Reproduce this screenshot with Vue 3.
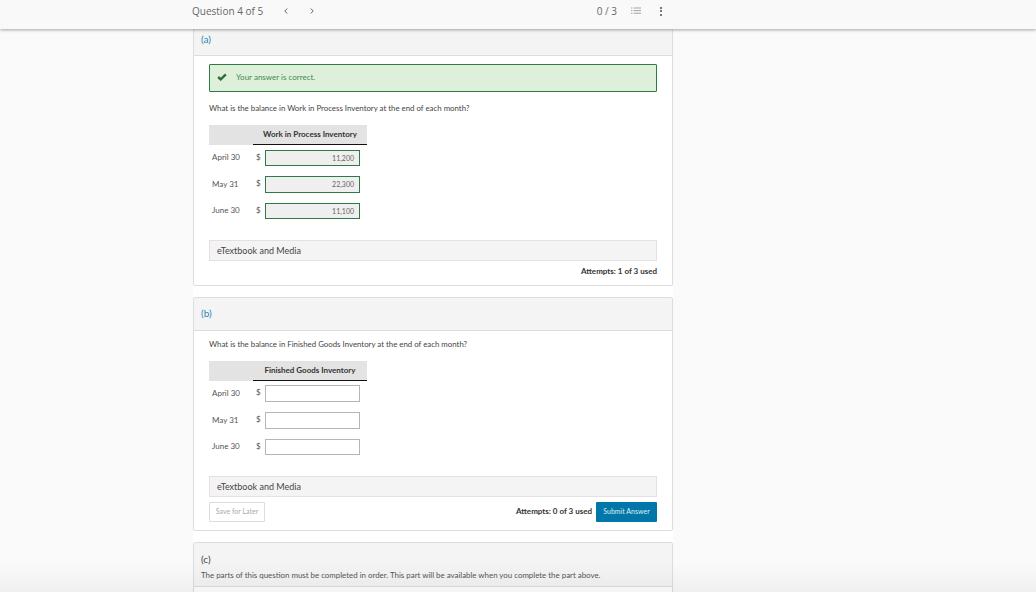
<template>
  <div class="page">
    <header class="topbar">
      <div class="topbar-inner">
        <span class="q-count">Question 4 of 5</span>
        <svg class="chev first" viewBox="0 0 8 8"><path d="M5.2 1.5 2.8 4l2.4 2.5" /></svg>
        <svg class="chev" viewBox="0 0 8 8"><path d="M2.8 1.5 5.2 4 2.8 6.5" /></svg>
        <span class="score">0 / 3</span>
        <svg class="list-icon" viewBox="0 0 10 8">
          <path d="M0 1h1.4M2.6 1H10M0 3.6h1.4M2.6 3.6H10M0 6.2h1.4M2.6 6.2H10" />
        </svg>
        <div class="dots"><i></i><i></i><i></i></div>
      </div>
    </header>

    <main class="content">
      <section v-for="part in parts" :key="part.label" class="card" :class="{ 'card-first': part.correct }">
        <div class="card-head">{{ part.label }}</div>
        <div class="card-body">
          <div v-if="part.correct" class="alert">
            <svg class="check" viewBox="0 0 12 10"><path d="M1.2 5 4.4 8 10.8 1.8" /></svg>
            <span class="alert-text">Your answer is correct.</span>
          </div>
          <p class="question">{{ part.question }}</p>

          <div class="answer-table">
            <div class="th-blank"></div>
            <div class="th-title">{{ part.account }}</div>
            <template v-for="row in part.rows" :key="row.month">
              <div class="month">{{ row.month }}</div>
              <div class="cell">
                <span class="dollar">$</span>
                <div class="input" :class="{ filled: part.correct }">{{ row.value }}</div>
              </div>
            </template>
          </div>

          <div class="media">eTextbook and Media</div>

          <div v-if="part.correct" class="foot foot-used">
            <span class="attempts">{{ part.attempts }}</span>
          </div>
          <div v-else class="foot">
            <button class="later">Save for Later</button>
            <span class="attempts">{{ part.attempts }}</span>
            <button class="submit">Submit Answer</button>
          </div>
        </div>
      </section>

      <section class="card card-locked">
        <div class="locked-head">
          <div class="locked-label">(c)</div>
          <div class="locked-note">The parts of this question must be completed in order. This part will be available when you complete the part above.</div>
        </div>
        <div class="locked-rest"></div>
      </section>
    </main>
    <div class="bottom-fade"></div>
  </div>
</template>

<script setup>
const parts = [
  {
    label: '(a)',
    correct: true,
    question: 'What is the balance in Work in Process Inventory at the end of each month?',
    account: 'Work in Process Inventory',
    attempts: 'Attempts: 1 of 3 used',
    rows: [
      { month: 'April 30', value: '11,200' },
      { month: 'May 31', value: '22,300' },
      { month: 'June 30', value: '11,100' }
    ]
  },
  {
    label: '(b)',
    correct: false,
    question: 'What is the balance in Finished Goods Inventory at the end of each month?',
    account: 'Finished Goods Inventory',
    attempts: 'Attempts: 0 of 3 used',
    rows: [
      { month: 'April 30', value: '' },
      { month: 'May 31', value: '' },
      { month: 'June 30', value: '' }
    ]
  }
]
</script>

<style>
html, body {
  margin: 0;
  background: #fafafa;
}
</style>

<style scoped>
.page {
  height: 592px;
  overflow: hidden;
  position: relative;
  background: #fafafa;
  font-family: Lato, "Liberation Sans", sans-serif;
  color: #444;
}

.topbar {
  height: 29px;
  background: #f9f9f9;
  box-shadow: 0 1px 3px rgba(0, 0, 0, 0.35);
  position: relative;
  z-index: 2;
}

.topbar-inner {
  width: 480px;
  height: 100%;
  box-sizing: border-box;
  padding-bottom: 7px;
  margin-left: 192px;
  display: flex;
  align-items: center;
  font-family: "Open Sans", sans-serif;
  font-size: 10px;
  color: #666;
}

.chev {
  width: 8px;
  height: 8px;
  margin-left: 18px;
  fill: none;
  stroke: #666;
  stroke-width: 1;
}

.chev.first {
  margin-left: 19px;
}

.score {
  margin-left: auto;
}

.list-icon {
  width: 10px;
  height: 8px;
  margin-left: 14px;
  fill: none;
  stroke: #999;
  stroke-width: 0.9;
}

.dots {
  display: flex;
  flex-direction: column;
  gap: 1.5px;
  margin-left: 19px;
  margin-right: 10px;
}

.dots i {
  width: 2px;
  height: 2px;
  background: #777;
}

.content {
  width: 480px;
  margin-left: 193px;
  margin-top: -1px;
  background: #fff;
  display: flex;
  flex-direction: column;
  gap: 11px;
}

.card {
  border: 1px solid #ddd;
  border-radius: 2px;
  background: #fff;
}

.card-first {
  border-top: 0;
}

.card-head {
  height: 33px;
  padding: 9px 7px 0;
  box-sizing: border-box;
  background: #f4f4f4;
  border-bottom: 1px solid #ddd;
  font-size: 10px;
  color: #1f87b4;
}

.card-first .card-head {
  height: 28px;
  padding-top: 5px;
}

.card-body {
  padding: 0 15px;
}

.alert {
  height: 28px;
  margin-top: 8px;
  box-sizing: border-box;
  border: 1px solid #2f7a43;
  border-radius: 1px;
  background: #deefda;
  display: flex;
  align-items: center;
  padding-left: 7px;
  font-size: 8px;
  color: #3f8a55;
}

.alert-text {
  padding-bottom: 2px;
}

.check {
  width: 10px;
  height: 8px;
  margin-right: 9px;
  margin-top: -3px;
  fill: none;
  stroke: #2b6e3b;
  stroke-width: 3;
}

.question {
  margin: 0;
  padding-top: 8px;
  height: 22px;
  line-height: 11px;
  font-size: 7.85px;
  color: #444;
}

.card-first .question {
  padding-top: 11px;
}

.answer-table {
  display: grid;
  grid-template-columns: 44px 114px;
  grid-template-rows: 20px repeat(3, 26.67px);
  width: 158px;
  font-size: 8px;
}

.th-blank,
.th-title {
  background: #e3e3e3;
}

.th-title {
  border-bottom: 1px solid #111;
  box-sizing: border-box;
  text-align: center;
  line-height: 18px;
  font-weight: 700;
  color: #333;
}

.month {
  padding-left: 3px;
  line-height: 24px;
  color: #555;
}

.cell {
  display: flex;
  align-items: flex-start;
  padding-top: 4.5px;
}

.dollar {
  width: 9px;
  padding-left: 3px;
  line-height: 14px;
  color: #555;
}

.input {
  width: 95px;
  height: 16.5px;
  box-sizing: border-box;
  border: 1px solid #b5b5b5;
  text-align: right;
  padding-right: 5px;
  line-height: 15px;
  font-size: 7px;
  color: #666;
  background: #fff;
}

.input.filled {
  background: #efefef;
  border-color: #2f7a43;
}

.media {
  height: 21px;
  margin-top: 15px;
  box-sizing: border-box;
  border: 1px solid #e2e2e2;
  background: #f4f4f4;
  padding-left: 7px;
  line-height: 19px;
  font-size: 9px;
  color: #444;
}

.foot {
  display: flex;
  align-items: center;
  height: 33px;
  padding: 5px 0 8px;
  box-sizing: border-box;
}

.foot-used {
  justify-content: flex-end;
  height: 24px;
  padding: 0 0 3px;
}

.attempts {
  padding-bottom: 1px;
  font-size: 8px;
  font-weight: 700;
  color: #333;
}

.later {
  width: 56px;
  height: 20px;
  margin: 0 auto 0 0;
  padding: 0 0 1px;
  border: 1px solid #ddd;
  border-radius: 1px;
  background: #fff;
  font-family: inherit;
  font-size: 7px;
  color: #aaa;
}

.submit {
  width: 61px;
  height: 20px;
  margin-left: 4px;
  padding: 0 0 1px;
  border: 0;
  border-radius: 1px;
  background: #0077a8;
  font-family: inherit;
  font-size: 7px;
  color: #dfeef5;
}

.locked-head {
  height: 44px;
  padding: 10px 7px 0;
  box-sizing: border-box;
  background: #f4f4f4;
  border-bottom: 1px solid #ddd;
}

.locked-label {
  font-size: 10px;
  line-height: 13px;
  color: #444;
}

.locked-note {
  font-size: 7.9px;
  line-height: 13px;
  margin-top: 3px;
  color: #555;
}

.locked-rest {
  height: 40px;
}

.bottom-fade {
  position: absolute;
  left: 0;
  right: 0;
  bottom: 0;
  height: 30px;
  background: linear-gradient(rgba(0, 0, 0, 0), rgba(0, 0, 0, 0.045));
  pointer-events: none;
  z-index: 3;
}
</style>
